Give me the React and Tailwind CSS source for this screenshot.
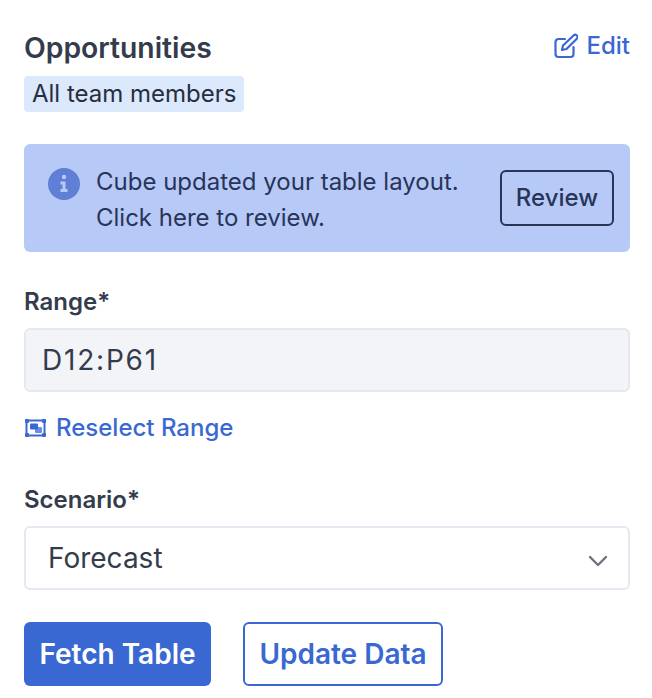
export default function App() {
  return (
    <div className="w-[652px] h-[698px] bg-white pl-6 pr-[22px] pt-[28px] font-['Inter',sans-serif] overflow-hidden">
      <div className="flex justify-between items-start">
        <div className="flex flex-col items-start">
          <div className="text-[28.300px] leading-[40px] font-semibold text-[#343c4c] h-[40px]">Opportunities</div>
          <div className="mt-[8px] h-[36px] w-[220px] px-2 flex items-center whitespace-nowrap rounded-[4px] bg-[#dce8fb] text-[24px] text-[#262e40]">All team members</div>
        </div>
        <div className="flex items-center gap-[8px] text-[#3a68d2] text-[24px] font-medium h-[36px]">
          <svg width="24" height="26" viewBox="0 0 24 26" fill="none" stroke="currentColor" strokeWidth="2.2" strokeLinecap="round" strokeLinejoin="round">
            <path d="M11 6H4.500A3 3 0 0 0 1.500 9v12a3 3 0 0 0 3 3h12a3 3 0 0 0 3-3v-7" />
            <path d="M19.500 2.500a2.300 2.300 0 0 1 3.300 3.300L12.500 16l-4.500 1 1-4.500z" />
          </svg>
          <span>Edit</span>
        </div>
      </div>

      <div className="mt-[32px] h-[108px] rounded-[6px] bg-[#b7c9f7] pl-6 pr-4 flex items-center">
        <div className="w-[32px] h-[32px] rounded-full bg-[#5f7fd6] flex items-center justify-center shrink-0 -mt-[28px]">
          <svg width="12" height="20" viewBox="0 0 12 20" fill="#b7c9f7">
            <circle cx="6" cy="3" r="2.200" />
            <path d="M2.500 7.500H7.500V15H9.500V18H2.500V15H4.500V10.500H2.500z" />
          </svg>
        </div>
        <div className="ml-[16px] flex-1 pt-1 text-[24px] leading-[36px] text-[#283458]">
          <div>Cube updated your table layout.</div>
          <div>Click here to review.</div>
        </div>
        <div className="w-[114px] h-[56px] rounded-[6px] border-2 border-[#283458] flex items-center justify-center text-[24px] font-medium text-[#283458]">Review</div>
      </div>

      <div className="mt-[32px] text-[24px] leading-[36px] font-semibold text-[#343c4c]">Range*</div>
      <div className="mt-[8px] h-[64px] rounded-[6px] border-2 border-[#e5e8f0] bg-[#f3f4f8] pl-[16px] flex items-center text-[28px] text-[#343c4c] tracking-[1.8px]">D12:P61</div>
      <div className="mt-[16px] flex items-center gap-[10px] text-[#3a68d2] text-[24px] font-medium h-[40px]">
        <svg width="21" height="18" viewBox="0 0 21 18" fill="none" className="ml-[1px]">
          <rect x="1.500" y="1.500" width="18" height="15" stroke="currentColor" strokeWidth="2" />
          <rect x="0" y="0" width="4" height="4" rx="1" fill="currentColor" />
          <rect x="17" y="0" width="4" height="4" rx="1" fill="currentColor" />
          <rect x="0" y="14" width="4" height="4" rx="1" fill="currentColor" />
          <rect x="17" y="14" width="4" height="4" rx="1" fill="currentColor" />
          <rect x="5" y="4.500" width="8" height="6" rx="1" fill="currentColor" />
          <rect x="10" y="8" width="7" height="6" rx="1" fill="currentColor" opacity="0.75" />
        </svg>
        <span>Reselect Range</span>
      </div>

      <div className="mt-[34px] text-[24px] leading-[36px] font-semibold text-[#343c4c]">Scenario*</div>
      <div className="mt-[8px] h-[64px] rounded-[6px] border-2 border-[#e5e8f0] bg-white pl-[22px] pr-[20px] flex items-center justify-between text-[28px] text-[#343c4c]">
        <span>Forecast</span>
        <svg width="20" height="12" viewBox="0 0 20 12" fill="none" stroke="#6b7280" strokeWidth="2.400" strokeLinecap="round" strokeLinejoin="round" className="mt-[6px]">
          <path d="M2 2l8 8 8-8" />
        </svg>
      </div>
      <div className="mt-[32px] flex gap-[32px]">
        <div className="h-[64px] w-[187px] rounded-[6px] bg-[#3a68d2] flex items-center justify-center text-white text-[28px] font-semibold">Fetch Table</div>
        <div className="h-[64px] w-[200px] rounded-[6px] border-2 border-[#3a68d2] flex items-center justify-center text-[#3a68d2] text-[28px] font-semibold">Update Data</div>
      </div>
    </div>
  );
}
